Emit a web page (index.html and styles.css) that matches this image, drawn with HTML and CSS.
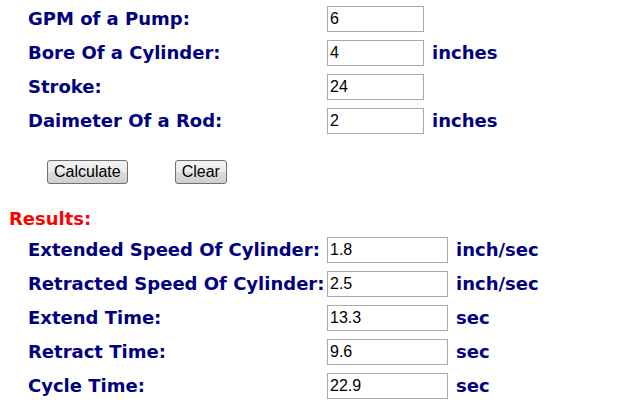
FILE: index.html
```html
<!DOCTYPE html>
<html lang="en">
<head>
  <meta charset="UTF-8">
  <title>Cylinder Speed Calculator</title>
  <link rel="stylesheet" href="styles.css">
</head>
<body>
  <form class="calc">
    <div class="rows inputs">
      <label class="lbl" for="gpm">GPM of a Pump:</label>
      <input class="box" id="gpm" type="text" value="6">
      <span class="unit"></span>

      <label class="lbl" for="bore">Bore Of a Cylinder:</label>
      <input class="box" id="bore" type="text" value="4">
      <span class="unit">inches</span>

      <label class="lbl" for="stroke">Stroke:</label>
      <input class="box" id="stroke" type="text" value="24">
      <span class="unit"></span>

      <label class="lbl" for="rod">Daimeter Of a Rod:</label>
      <input class="box" id="rod" type="text" value="2">
      <span class="unit">inches</span>
    </div>

    <div class="buttons">
      <button type="button" class="btn">Calculate</button>
      <button type="reset" class="btn">Clear</button>
    </div>

    <div class="results-title">Results:</div>

    <div class="rows outputs">
      <label class="lbl" for="ext">Extended Speed Of Cylinder:</label>
      <input class="box wide" id="ext" type="text" value="1.8">
      <span class="unit">inch/sec</span>

      <label class="lbl" for="ret">Retracted Speed Of Cylinder:</label>
      <input class="box wide" id="ret" type="text" value="2.5">
      <span class="unit">inch/sec</span>

      <label class="lbl" for="extTime">Extend Time:</label>
      <input class="box wide" id="extTime" type="text" value="13.3">
      <span class="unit">sec</span>

      <label class="lbl" for="retTime">Retract Time:</label>
      <input class="box wide" id="retTime" type="text" value="9.6">
      <span class="unit">sec</span>

      <label class="lbl" for="cycle">Cycle Time:</label>
      <input class="box wide" id="cycle" type="text" value="22.9">
      <span class="unit">sec</span>
    </div>
  </form>
</body>
</html>
```

FILE: styles.css
```css
* { box-sizing: border-box; }
body {
  margin: 0;
  padding: 6px 9px;
  background: #fff;
  font-family: "DejaVu Sans", Verdana, sans-serif;
}
.rows {
  display: grid;
  grid-template-columns: 291px 97px auto;
  column-gap: 8px;
  row-gap: 8px;
  align-items: center;
  padding-left: 19px;
}
.outputs { grid-template-columns: 291px 121px auto; }
.lbl, .unit {
  font-weight: bold;
  font-size: 18px;
  line-height: 22px;
  color: #000080;
  white-space: nowrap;
}
.box {
  height: 26px;
  width: 100%;
  margin: 0;
  padding: 1px 2px;
  border: 1px solid #a9a9a9;
  font-family: "Liberation Sans", Arial, sans-serif;
  font-size: 16px;
  color: #000;
  background: #fff;
}
.buttons {
  display: flex;
  gap: 47px;
  padding: 26px 0 0 38px;
}
.btn {
  height: 24px;
  padding: 0 6px;
  font-family: "Liberation Sans", Arial, sans-serif;
  font-size: 16px;
  color: #000;
  border: 1px solid #707070;
  border-radius: 3px;
  background: linear-gradient(#f2f2f2, #ebebeb 50%, #dddddd 51%, #cfcfcf);
}
.results-title {
  margin: 24px 0 7px;
  font-weight: bold;
  font-size: 18px;
  line-height: 22px;
  color: #ff0000;
}
```
